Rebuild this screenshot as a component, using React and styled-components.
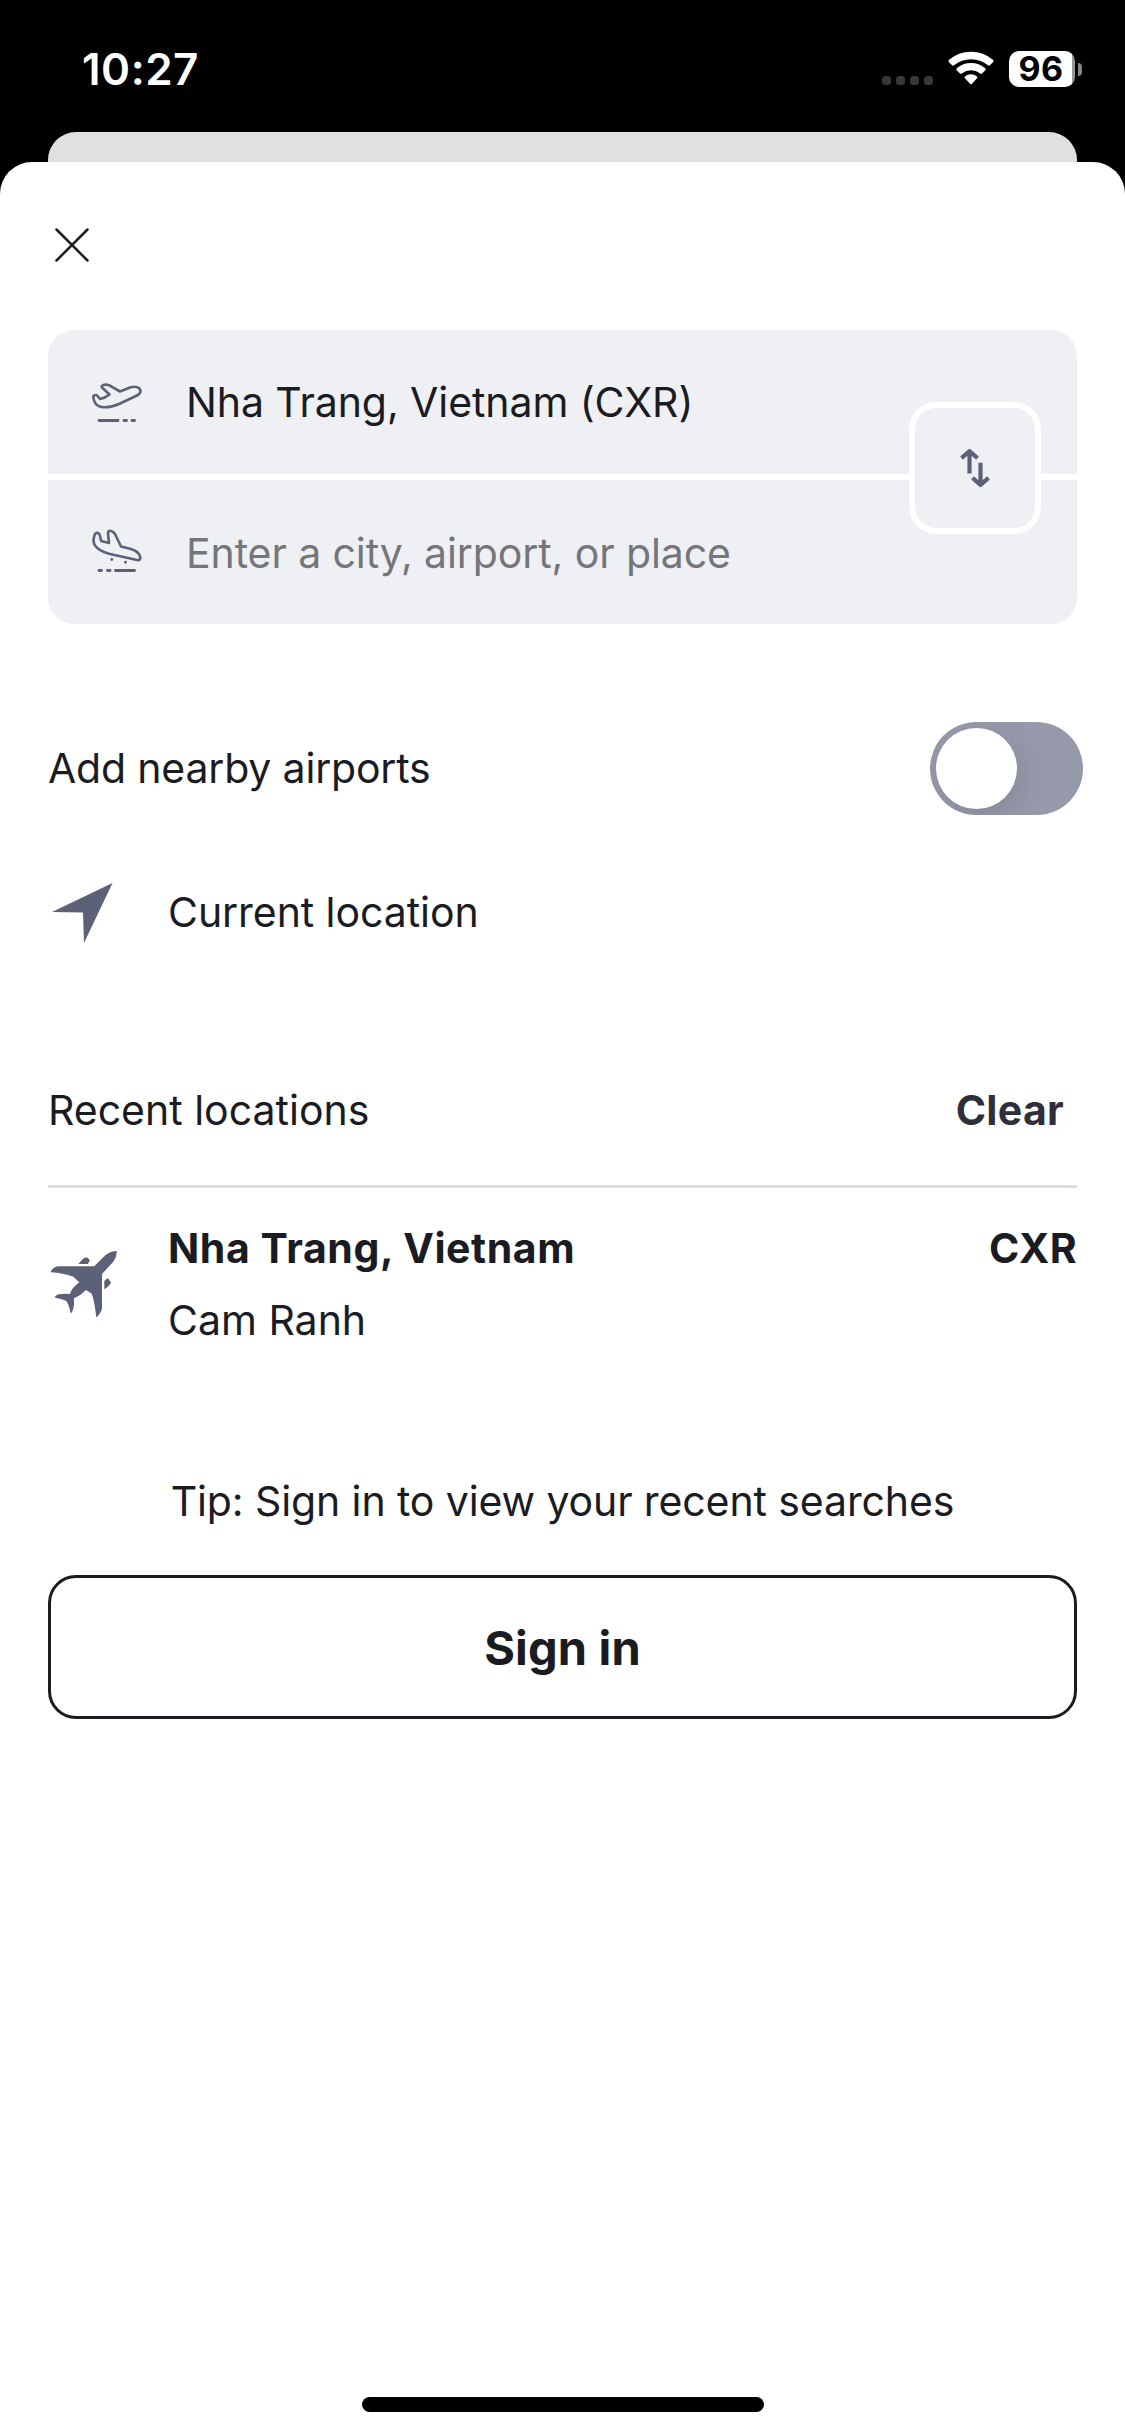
import React from "react";
import styled, { createGlobalStyle } from "styled-components";

const ink = "#1b1b22";
const slate = "#5d6177";

const Global = createGlobalStyle`
  * { box-sizing: border-box; }
  html, body { margin: 0; background: #000; }
  button { font: inherit; color: inherit; margin: 0; padding: 0; border: 0; background: none; }
`;

const Screen = styled.div`
  width: 1125px;
  height: 2436px;
  display: flex;
  flex-direction: column;
  overflow: hidden;
  background: #000;
  color: ${ink};
  font-family: Inter, "Liberation Sans", sans-serif;
  font-size: 41px;
`;

const Glyph = styled.svg`
  display: block;
  flex: none;
  overflow: visible;
`;

const StatusBar = styled.header`
  height: 132px;
  flex: none;
  display: flex;
  justify-content: space-between;
  align-items: flex-start;
  padding: 51px 43px 0 82px;
  color: #fff;
`;

const Clock = styled.span`
  font-size: 44px;
  line-height: 36px;
  font-weight: 600;
  letter-spacing: ${(p) => p.$track}px;
`;

const StatusIcons = styled.div`
  display: flex;
  align-items: flex-start;
  height: 36px;
`;

const Signal = styled.div`
  display: flex;
  gap: 5px;
  margin: 25px 15px 0 0;
`;

const Dot = styled.i`
  width: 9px;
  height: 9px;
  border-radius: 3.5px;
  background: #383838;
`;

const Battery = styled.div`
  width: 66px;
  height: 36px;
  margin-left: 15px;
  border-radius: 10px;
  background: linear-gradient(90deg, #fff 63px, #959595 63px);
  color: #000;
  font-size: 34px;
  line-height: 36px;
  font-weight: 700;
  letter-spacing: 0.5px;
  text-align: center;
  padding-right: 2px;
`;

const BatteryCap = styled.i`
  width: 4px;
  height: 13px;
  margin: 12px 0 0 3px;
  border-radius: 0 4px 4px 0;
  background: #858585;
`;

const BackCard = styled.div`
  height: 30px;
  flex: none;
  margin: 0 48px;
  border-radius: 28px 28px 0 0;
  background: #e0e0e0;
`;

const Sheet = styled.main`
  flex: 1;
  display: flex;
  flex-direction: column;
  padding: 0 48px 24px;
  border-radius: 32px 32px 0 0;
  background: #fff;
`;

const CloseButton = styled.button`
  width: 48px;
  height: 48px;
  margin: 59px 0 61px;
  padding: 8px;
`;

const Route = styled.section`
  position: relative;
  display: flex;
  flex-direction: column;
  gap: 6px;
  border-radius: 26px;
  overflow: hidden;
`;

const Field = styled.div`
  height: 144px;
  display: flex;
  align-items: center;
  gap: 44px;
  padding: ${(p) => (p.$empty ? 2 : 0)}px 0 0 43px;
  background: #eff0f4;
  color: ${(p) => (p.$empty ? "#75767a" : ink)};
  letter-spacing: ${(p) => p.$track}px;
`;

const FieldIcon = styled.span`
  padding-bottom: ${(p) => p.$lift}px;
`;

const SwapButton = styled.button`
  position: absolute;
  right: 36px;
  top: 72px;
  width: 132px;
  height: 132px;
  border: 6px solid #fff;
  border-radius: 27px;
  background: #eff0f4;
  display: flex;
  align-items: center;
  justify-content: center;
`;

const ToggleRow = styled.section`
  display: flex;
  align-items: center;
  justify-content: space-between;
  margin: 98px -6px 0 0;
`;

const Toggle = styled.button`
  width: 153px;
  height: 93px;
  padding: 6px;
  border-radius: 47px;
  background: #9699a9;
  overflow: hidden;
`;

const Knob = styled.span`
  display: block;
  width: 81px;
  height: 81px;
  border-radius: 50%;
  background: #fff;
  box-shadow: 4px 8px 24px rgba(60, 60, 80, 0.16);
`;

const Label = styled.span`
  line-height: 48px;
  white-space: nowrap;
  font-weight: ${(p) => (p.$bold ? 700 : 400)};
  letter-spacing: ${(p) => p.$track ?? 0}px;
  padding-bottom: ${(p) => p.$lift ?? 0}px;
`;

const LocationRow = styled.section`
  display: flex;
  align-items: center;
  gap: 55px;
  height: 60px;
  margin: 68px 0 0 4px;
`;

const RecentHeader = styled.header`
  display: flex;
  justify-content: space-between;
  align-items: center;
  height: 153px;
  margin-top: 92px;
  padding: 0 13px 0 0;
  border-bottom: 3px solid #dcdce8;
`;

const ClearButton = styled.button`
  color: #2e2f3a;
`;

const Place = styled.article`
  display: flex;
  align-items: flex-start;
  padding: 36px 0 0 3px;
`;

const PlaceNames = styled.div`
  flex: 1;
  display: flex;
  flex-direction: column;
  gap: 24px;
  margin-left: 51px;
`;

const PlaneSlot = styled.span`
  padding-top: 27px;
`;

const Tip = styled.p`
  margin: 133px 0 0;
  line-height: 48px;
  text-align: center;
  letter-spacing: ${(p) => p.$track}px;
`;

const SignIn = styled.button`
  height: 144px;
  margin-top: 50px;
  border: 3px solid ${ink};
  border-radius: 28px;
  font-size: 47px;
  font-weight: 700;
  letter-spacing: ${(p) => p.$track}px;
`;

const HomeIndicator = styled.div`
  width: 402px;
  height: 15px;
  margin: auto auto 0;
  border-radius: 8px;
  background: #000;
`;

const Wifi = () => (
  <Glyph width="46" height="34" viewBox="0 0 46 34" fill="#fff">
    <path d="M1 11.2Q-.2 10 1 8.800Q10.500 .7 23 .7T45 8.800Q46.200 10 45 11.200L41.900 14.300Q41 15.100 40 14.300Q32.500 8.200 23 8.200T6 14.300Q5 15.100 4.100 14.300Z" />
    <path d="M8.700 19.200Q7.700 18.200 8.700 17.200Q15 11.900 23 11.900T37.300 17.200Q38.300 18.200 37.300 19.200L34 22.400Q33.200 23.200 32.200 22.400Q28 19.300 23 19.300T13.800 22.400Q12.800 23.200 12 22.400Z" />
    <path d="M17 27.300Q15.900 26.200 17 25.400Q19.600 23.300 23 23.300T29 25.400Q30.100 26.200 29 27.300L23.800 32.900Q23 33.700 22.200 32.900Z" />
  </Glyph>
);

const Cross = () => (
  <Glyph width="32" height="32" viewBox="0 0 32 32" stroke={ink} strokeWidth="2.500" strokeLinecap="round">
    <path d="M.5 .5 31.500 31.500M31.500 .5 .5 31.500" />
  </Glyph>
);

const TakeOff = () => (
  <Glyph width="51" height="39" viewBox="0 0 51 39" fill="none" stroke={slate} strokeWidth="2.600" strokeLinecap="round" strokeLinejoin="round">
    <path d="M2.200 13.500Q2.500 12 4.500 12Q6 12 7 13.500L9 16Q14 15 18.500 11.500L11 4.500Q9.800 3 12.300 2.100Q15 1.200 18 2.200L29 8.500L39 4.500Q45 2.700 48.500 5.500Q51 9 47 12L28 21Q20 24.600 13 24.300Q7 24 4.500 20.500Q2.300 17 2.200 13.500Z" />
    <path strokeWidth="2.900" d="M8 37.500H27M33 37.500H35.500M41 37.500H43.500" />
  </Glyph>
);

const Landing = () => (
  <Glyph width="51" height="43" viewBox="0 0 51 43" fill="none" stroke={slate} strokeWidth="2.600" strokeLinecap="round" strokeLinejoin="round">
    <path d="M3.800 5.500Q5 3.500 7.200 4Q8.600 4.500 9 7L10.200 12L18 14L17 4.500Q17 1.700 19 1.700Q22 2 24 5L30 17.500L40 20Q46.500 22 48.800 26.500Q50.600 32 46 31L18 24.800Q8 22 4 16.500Q1.200 12 3.800 5.500Z" />
    <path strokeWidth="2.900" d="M8 41.500H10.500M16.500 41.500H19M24.500 41.500H43.500M20.800 30.500V30.500M34.500 33.300V33.300" />
  </Glyph>
);

const Swap = () => (
  <Glyph width="30" height="38" viewBox="0 0 30 38" fill="none" stroke={slate} strokeWidth="4.200" strokeLinejoin="round">
    <path d="M9.500 24.500V3M1.500 9.200L9.500 2.200L17.500 9.200M20.500 13.800V35M12.500 28.800L20.500 35.800L28.500 28.800" />
  </Glyph>
);

const Arrow = () => (
  <Glyph width="61" height="60" viewBox="0 0 61 60" fill={slate}>
    <path d="M0 29 60.500 0 32 60 31 29.500Z" />
  </Glyph>
);

const Plane = () => (
  <Glyph width="66" height="66" viewBox="0 0 66 66" fill={slate}>
    <path d="M0 20Q2 16.200 6.500 15.300H43.300L54 4.500Q60 0 65.700 .1Q66.200 5 62.500 10.500L51 23V57.300Q50.500 61 46.300 65.700H45.200Q43.500 50 40.700 42.800L35 39Q30 44.500 23 47.300V54Q22.500 58 20.700 61.700H19.500Q18 53 15 49.700Q10 48 3.500 46.500Q5 43.700 8 43.200Q12 42.600 19 43Q20 37.500 28.300 31.300L22.300 25.700Q12 22 0 21.300Z" />
    <path d="M27.300 13L32.300 7.500Q34.500 6 36.700 6.700L39 9.500L36.700 13ZM53.300 38.300V30L56.700 27L60 31.500Q58.500 35 53.300 38.300Z" />
  </Glyph>
);

export default function App() {
  return (
    <Screen>
      <Global />
      <StatusBar>
        <Clock $track={0.5}>10:27</Clock>
        <StatusIcons>
          <Signal>
            <Dot /><Dot /><Dot /><Dot />
          </Signal>
          <Wifi />
          <Battery>96</Battery>
          <BatteryCap />
        </StatusIcons>
      </StatusBar>
      <BackCard />
      <Sheet>
        <CloseButton aria-label="Close"><Cross /></CloseButton>
        <Route>
          <Field $track={-0.08}>
            <FieldIcon $lift={0}><TakeOff /></FieldIcon>
            Nha Trang, Vietnam (CXR)
          </Field>
          <Field $empty $track={-0.1}>
            <FieldIcon $lift={6}><Landing /></FieldIcon>
            Enter a city, airport, or place
          </Field>
          <SwapButton aria-label="Swap"><Swap /></SwapButton>
        </Route>
        <ToggleRow>
          <Label $track={-0.18} $lift={2}>Add nearby airports</Label>
          <Toggle role="switch" aria-checked="false"><Knob /></Toggle>
        </ToggleRow>
        <LocationRow>
          <Arrow />
          <Label $track={-0.06} $lift={2}>Current location</Label>
        </LocationRow>
        <RecentHeader>
          <Label>Recent locations</Label>
          <ClearButton><Label $bold $track={0.3}>Clear</Label></ClearButton>
        </RecentHeader>
        <Place>
          <PlaneSlot><Plane /></PlaneSlot>
          <PlaceNames>
            <Label $bold $track={0.58}>Nha Trang, Vietnam</Label>
            <Label>Cam Ranh</Label>
          </PlaceNames>
          <Label $bold $track={0.4}>CXR</Label>
        </Place>
        <Tip $track={-0.11}>Tip: Sign in to view your recent searches</Tip>
        <SignIn $track={0.15}>Sign in</SignIn>
        <HomeIndicator />
      </Sheet>
    </Screen>
  );
}
